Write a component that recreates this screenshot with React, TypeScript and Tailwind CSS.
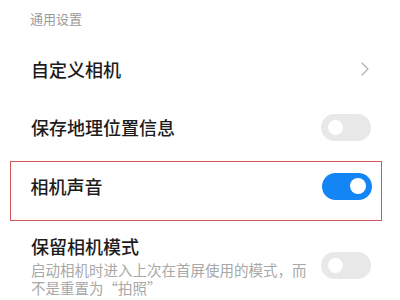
import React from "react";

function Toggle({ on }: { on: boolean }) {
  return (
    <div
      className={
        on
          ? "w-[50px] h-[27px] rounded-full bg-[#1485f5] flex items-center justify-end px-[6px] shrink-0"
          : "w-[50px] h-[27px] rounded-full bg-[#e8e8e8] flex items-center justify-start px-[7px] shrink-0"
      }
    >
      <div className={on ? "w-[16px] h-[16px] rounded-full bg-white" : "w-[15px] h-[15px] rounded-full bg-white"} />
    </div>
  );
}

export default function App() {
  return (
    <div
      className="w-[400px] h-[300px] bg-white overflow-hidden"
      style={{ fontFamily: '"Noto Sans CJK SC", "Noto Sans", sans-serif' }}
    >
      <div className="h-[40px] pl-[30px] pt-[11px] text-[13px] leading-[16px] text-[#9b9b9b]">通用设置</div>

      <div className="h-[58px] flex items-center justify-between pl-[31px] pr-[29px]">
        <span className="text-[18px] leading-[24px] font-medium text-[#1c1c1c]">自定义相机</span>
        <div className="w-[50px] flex justify-end pr-[2px]">
          <svg width="8" height="14" viewBox="0 0 8 14" fill="none">
            <polyline points="1,1 7,7 1,13" stroke="#b3b3b3" strokeWidth="1.3" strokeLinecap="round" strokeLinejoin="round" />
          </svg>
        </div>
      </div>

      <div className="h-[58px] flex items-center justify-between pl-[31px] pr-[29px]">
        <span className="text-[18px] leading-[24px] font-medium text-[#1c1c1c]">保存地理位置信息</span>
        <Toggle on={false} />
      </div>

      <div className="mt-[5px] ml-[10px] mr-[18px] border-[1.5px] border-[#d4585a] pb-[10px]">
        <div className="h-[48px] flex items-center justify-between pl-[19.5px] pr-[9.5px]">
          <span className="text-[18px] leading-[24px] font-medium text-[#1c1c1c]">相机声音</span>
          <Toggle on={true} />
        </div>
      </div>

      <div className="mt-[13px] flex items-center justify-between pl-[31px] pr-[29px]">
        <div className="flex flex-col">
          <span className="text-[18px] leading-[24px] font-medium text-[#1c1c1c]">保留相机模式</span>
          <span className="w-[282px] mt-[3px] text-[14.5px] leading-[18px] text-[#a8a8a8]">
            启动相机时进入上次在首屏使用的模式，而不是重置为“拍照”
          </span>
        </div>
        <Toggle on={false} />
      </div>
    </div>
  );
}
